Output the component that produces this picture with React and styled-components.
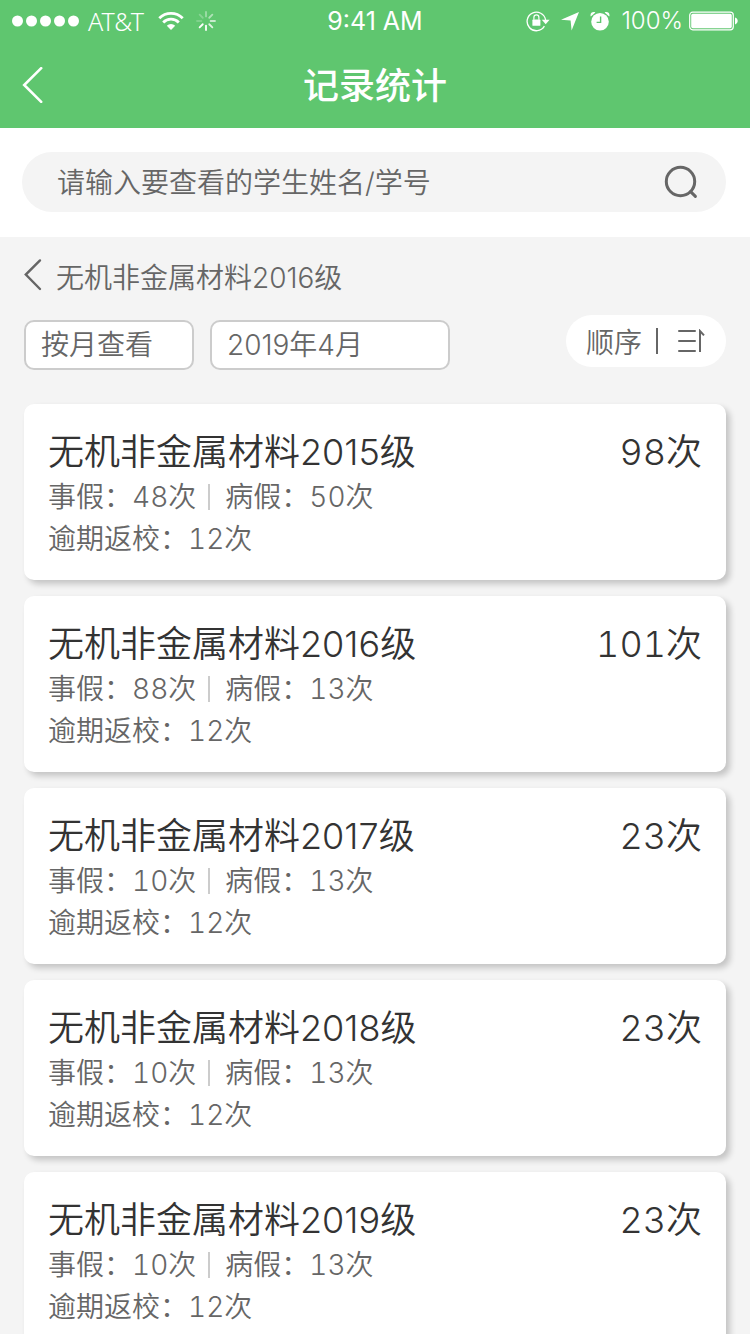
import React, { useState } from 'react';
import styled, { createGlobalStyle } from 'styled-components';

// ========== Data ==========
const records = [
  { id: 1, name: '无机非金属材料2015级', total: 98, personal: 48, sick: 50, late: 12 },
  { id: 2, name: '无机非金属材料2016级', total: 101, personal: 88, sick: 13, late: 12 },
  { id: 3, name: '无机非金属材料2017级', total: 23, personal: 10, sick: 13, late: 12 },
  { id: 4, name: '无机非金属材料2018级', total: 23, personal: 10, sick: 13, late: 12 },
  { id: 5, name: '无机非金属材料2019级', total: 23, personal: 10, sick: 13, late: 12 },
];

// ========== Styled Components ==========
const GlobalStyle = createGlobalStyle`
  * {
    box-sizing: border-box;
  }

  body {
    margin: 0;
    background: #f4f4f4;
    color: #666;
    font-family: Inter, 'Noto Sans CJK SC', sans-serif;
    font-size: 28px;
    font-weight: 350;
  }

  button, input, select {
    font: inherit;
    color: inherit;
  }
`;

const Page = styled.div`
  height: 100vh;
  display: flex;
  flex-direction: column;
`;

const Header = styled.header`
  flex: none;
  background: #5fc66f;
  color: #fff;
`;

const StatusBar = styled.div`
  display: grid;
  grid-template-columns: 1fr auto 1fr;
  align-items: center;
  height: 41px;
  padding: 0 12px;
  font-size: 24px;
`;

const StatusGroup = styled.div`
  display: flex;
  align-items: center;
  justify-content: ${(props) => (props.$end ? 'flex-end' : 'flex-start')};
  gap: ${(props) => props.$gap}px;
`;

const Carrier = styled.span`
  margin-right: 6px;
  font-family: 'Noto Sans', sans-serif;
  font-size: 25px;
  font-weight: 300;
  line-height: 32px;
`;

const Clock = styled.span`
  font-size: 25px;
  font-weight: 400;
`;

const Percent = styled.span`
  font-weight: 300;
`;

const NavBar = styled.div`
  display: grid;
  grid-template-columns: 1fr auto 1fr;
  align-items: center;
  height: 87px;
  padding: 0 22px;
`;

const IconButton = styled.button`
  display: flex;
  justify-self: start;
  padding: 0;
  border: none;
  background: none;
  cursor: pointer;
`;

const Title = styled.h1`
  margin: 0;
  padding-top: 2px;
  font-size: 36px;
  font-weight: 500;
  line-height: 52px;
`;

const SearchArea = styled.div`
  flex: none;
  padding: 24px 24px 25px 22px;
  background: #fff;
`;

const SearchBox = styled.form`
  display: flex;
  align-items: center;
  height: 60px;
  padding: 0 28px 0 35px;
  border-radius: 30px;
  background: #f4f4f4;
`;

const SearchInput = styled.input`
  flex: 1;
  min-width: 0;
  padding: 2px 0 0;
  border: none;
  outline: none;
  background: none;

  &::placeholder {
    color: #666;
    opacity: 1;
  }
`;

const Content = styled.main`
  flex: 1;
  min-height: 0;
  overflow-y: auto;
  scrollbar-width: none;
  padding: 20px 24px 24px;
`;

const Crumb = styled.a`
  display: flex;
  align-items: flex-start;
  gap: 14px;
  height: 40px;
  color: inherit;
  line-height: 42px;
  text-decoration: none;
`;

const Filters = styled.div`
  display: flex;
  align-items: flex-start;
  gap: 16px;
  margin: 18px 0 34px;
`;

const Picker = styled.select`
  appearance: none;
  width: ${(props) => (props.$wide ? 240 : 170)}px;
  height: 50px;
  margin-top: 5px;
  padding: 0 15px;
  border: 2px solid #ccc;
  border-radius: 10px;
  background: #fff;
  outline: none;
`;

const SortButton = styled.button`
  display: flex;
  align-items: center;
  height: 52px;
  margin-left: auto;
  padding: 0 20px;
  border: none;
  border-radius: 26px;
  background: #fff;
  cursor: pointer;
`;

const SortRule = styled.span`
  width: 2px;
  height: 26px;
  margin: 0 20px 0 14px;
  background: #666;
`;

const CardList = styled.ul`
  display: flex;
  flex-direction: column;
  gap: 16px;
  margin: 0;
  padding: 0;
  list-style: none;
`;

const Card = styled.li`
  padding: 24px 24px 20px;
  border-radius: 10px;
  background: #fff;
  box-shadow: 4px 4px 6px rgba(0, 0, 0, 0.2);
`;

const CardHead = styled.div`
  display: flex;
  justify-content: space-between;
  color: #333;
  font-size: 36px;
  line-height: 48px;
`;

const CardName = styled.h2`
  margin: 0;
  font-size: inherit;
  font-weight: inherit;
`;

const CardTotal = styled.span`
  font-variant-numeric: tabular-nums;
`;

const CardLine = styled.div`
  display: flex;
  align-items: center;
  font-variant-numeric: tabular-nums;
  line-height: 42px;
`;

const Divider = styled.span`
  width: 2px;
  height: 26px;
  margin: 0 15px 0 12px;
  background: #ccc;
`;

// ========== Icons ==========
const SignalDots = () => (
  <svg width="68" height="12" viewBox="0 0 68 12" fill="#fff">
    {[6, 20, 34, 48, 62].map((x) => (
      <circle key={x} cx={x - 0.5} cy="6" r="5.5" />
    ))}
  </svg>
);

const WifiIcon = () => (
  <svg width="26" height="20" viewBox="0 0 26 20" fill="none" stroke="#fff" strokeWidth="2.8">
    <path d="M1.3 7.2a16.5 16.5 0 0 1 23.4 0" />
    <path d="M5.2 11.4a11 11 0 0 1 15.6 0" />
    <path d="M13 19l-4.2-4.2a6 6 0 0 1 8.4 0z" fill="#fff" stroke="none" />
  </svg>
);

const Spinner = () => (
  <svg width="20" height="20" viewBox="0 0 20 20" stroke="#fff" strokeWidth="1.8" strokeLinecap="round">
    {[0.4, 0.5, 0.65, 0.8, 1, 1, 0.2, 0.25].map((opacity, i) => (
      <path key={i} d="M10 1v4.4" opacity={opacity} transform={`rotate(${i * 45} 10 10)`} />
    ))}
  </svg>
);

const LockIcon = () => (
  <svg width="24" height="22" viewBox="0 0 24 22" fill="none" stroke="#fff">
    <path d="M18.4 16.2A9.3 9.3 0 1 1 19.6 10" strokeWidth="1.3" />
    <path d="M15.8 9.8h7.8l-3.9 4.4z" fill="#fff" stroke="none" />
    <rect x="6.4" y="9.6" width="8" height="6.2" rx="0.6" fill="#fff" stroke="none" />
    <path d="M7.9 9.8V7.4a2.5 2.5 0 0 1 5 0v2.4" strokeWidth="1.2" />
  </svg>
);

const LocationIcon = () => (
  <svg width="18" height="20" viewBox="0 0 18 20" fill="#fff">
    <path d="M18 1L10.6 19.4 9.6 9.6 0 8.8z" />
  </svg>
);

const AlarmIcon = () => (
  <svg width="20" height="20" viewBox="0 0 20 20">
    <circle cx="10" cy="10.8" r="8.8" fill="#fff" />
    <path d="M0.8 5.6C-0.4 2.6 2.2 0.2 5.4 1.4zM19.2 5.6C20.4 2.6 17.8 0.2 14.6 1.4z" fill="#fff" />
    <path d="M10.6 5.4v6H6.6" fill="none" stroke="#5fc66f" strokeWidth="1.4" />
  </svg>
);

const BatteryIcon = () => (
  <svg width="49" height="20" viewBox="0 0 49 20">
    <rect x="0.7" y="1.2" width="43.6" height="17.6" rx="3" fill="none" stroke="#fff" strokeWidth="1.2" />
    <rect x="2.2" y="2.8" width="40.6" height="14.4" rx="1.6" fill="#fff" />
    <path d="M46 6.6c3.6 1 3.6 5.8 0 6.8z" fill="#fff" />
  </svg>
);

const BackIcon = () => (
  <svg width="22" height="36" viewBox="0 0 22 36" fill="none" stroke="#fff" strokeWidth="2.6">
    <path d="M19.2 1.2L2.2 18l17 16.8" strokeLinecap="round" />
  </svg>
);

const CrumbIcon = () => (
  <svg width="18" height="34" viewBox="0 0 18 34" fill="none" stroke="#666" strokeWidth="2.4">
    <path d="M16 3.4L1.8 17.6 16 32" strokeLinecap="round" />
  </svg>
);

const SearchIcon = () => (
  <svg width="34" height="34" viewBox="0 0 34 34" fill="none" stroke="#666" strokeWidth="3">
    <circle cx="16.5" cy="16.5" r="14.2" />
    <path d="M26.6 26.6l4.8 4.8" strokeLinecap="round" />
  </svg>
);

const SortIcon = () => (
  <svg width="28" height="24" viewBox="0 0 28 24" fill="none" stroke="#666" strokeWidth="2">
    <path d="M1 2h16M1 12h16M1 22h16" strokeLinecap="round" />
    <path d="M22 23V2l4 4.4" />
  </svg>
);

// ========== Main Component ==========
const App = () => {
  const [keyword, setKeyword] = useState('');

  return (
    <>
      <GlobalStyle />
      <Page>
        <Header>
          <StatusBar>
            <StatusGroup $gap={8}>
              <SignalDots />
              <Carrier>AT&amp;T</Carrier>
              <StatusGroup $gap={12}>
                <WifiIcon />
                <Spinner />
              </StatusGroup>
            </StatusGroup>
            <Clock>9:41 AM</Clock>
            <StatusGroup $gap={11} $end>
              <LockIcon />
              <LocationIcon />
              <AlarmIcon />
              <StatusGroup $gap={6}>
                <Percent>100%</Percent>
                <BatteryIcon />
              </StatusGroup>
            </StatusGroup>
          </StatusBar>
          <NavBar>
            <IconButton type="button" aria-label="返回">
              <BackIcon />
            </IconButton>
            <Title>记录统计</Title>
          </NavBar>
        </Header>

        <SearchArea>
          <SearchBox role="search" onSubmit={(e) => e.preventDefault()}>
            <SearchInput
              type="text"
              aria-label="请输入要查看的学生姓名/学号"
              placeholder="请输入要查看的学生姓名/学号"
              value={keyword}
              onChange={(e) => setKeyword(e.target.value)}
            />
            <IconButton type="submit" aria-label="搜索">
              <SearchIcon />
            </IconButton>
          </SearchBox>
        </SearchArea>

        <Content>
          <Crumb href="#">
            <CrumbIcon />
            无机非金属材料2016级
          </Crumb>

          <Filters>
            <Picker aria-label="查看方式">
              <option>按月查看</option>
            </Picker>
            <Picker aria-label="月份" $wide>
              <option>2019年4月</option>
            </Picker>
            <SortButton type="button">
              顺序
              <SortRule />
              <SortIcon />
            </SortButton>
          </Filters>

          <CardList>
            {records.map((record) => (
              <Card key={record.id}>
                <CardHead>
                  <CardName>{record.name}</CardName>
                  <CardTotal>{record.total}次</CardTotal>
                </CardHead>
                <CardLine>
                  事假：{record.personal}次
                  <Divider />
                  病假：{record.sick}次
                </CardLine>
                <CardLine>逾期返校：{record.late}次</CardLine>
              </Card>
            ))}
          </CardList>
        </Content>
      </Page>
    </>
  );
};

export default App;
